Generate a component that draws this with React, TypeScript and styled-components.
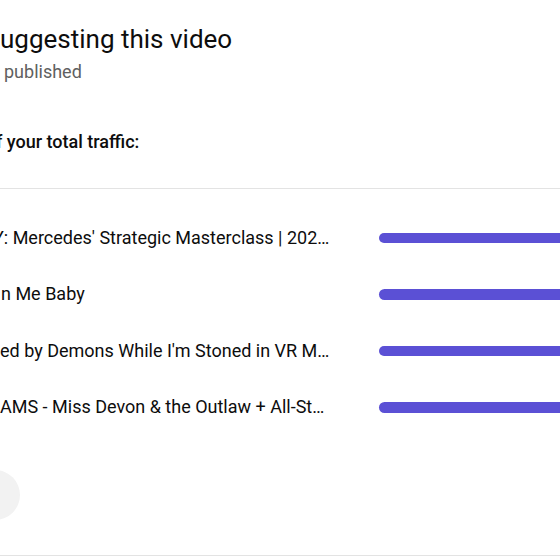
import React from "react";
import styled, { createGlobalStyle } from "styled-components";

const Global = createGlobalStyle`
  html, body {
    margin: 0;
    padding: 0;
    background: #ffffff;
    overflow: hidden;
  }
  body {
    font-family: Roboto, "Liberation Sans", Arial, sans-serif;
    color: #0f0f0f;
    -webkit-font-smoothing: antialiased;
  }
`;

const Viewport = styled.div`
  width: 560px;
  height: 560px;
  overflow: hidden;
`;

const Card = styled.section`
  width: 620px;
  display: flex;
  flex-direction: column;
  padding-top: 23px;
`;

const Title = styled.h2`
  margin: 0;
  font-size: 26px;
  line-height: 32px;
  font-weight: 400;
  color: #0d0d0d;
  white-space: nowrap;
`;

const Line = styled.div<{ $indent?: number; $muted?: boolean; $strong?: boolean; $gap?: number }>`
  margin-top: ${(p) => p.$gap ?? 0}px;
  font-size: 18px;
  line-height: 24px;
  font-weight: ${(p) => (p.$strong ? 500 : 400)};
  color: ${(p) => (p.$muted ? "#606060" : "#0d0d0d")};
  text-indent: ${(p) => p.$indent ?? 0}px;
  white-space: nowrap;
`;

const Divider = styled.hr`
  margin: 34px 0 0;
  border: 0;
  height: 1px;
  background: #e3e3e3;
`;

const List = styled.ul`
  list-style: none;
  margin: 0;
  padding: 20.6px 0 0;
  display: flex;
  flex-direction: column;
`;

const Row = styled.li`
  height: 56.5px;
  display: flex;
  align-items: center;
  gap: 46px;
`;

const VideoTitle = styled.span<{ $indent: number }>`
  flex: 0 0 333px;
  font-size: 18px;
  line-height: 24px;
  color: #0d0d0d;
  white-space: nowrap;
  overflow: hidden;
  text-overflow: ellipsis;
  text-indent: ${(p) => p.$indent}px;
`;

const Bar = styled.div`
  flex: 1;
  height: 10.5px;
  border-radius: 6px;
  background: #5b50d5;
`;

const Footer = styled.div`
  margin-top: 34.4px;
  display: flex;
`;

const MoreButton = styled.button`
  width: 80px;
  height: 50px;
  margin-left: -60px;
  border: 0;
  border-radius: 25px;
  background: #f2f2f2;
`;

const BottomRule = styled.div`
  margin-top: 35px;
  height: 1px;
  background: #e3e3e3;
`;

const rows = [
  { text: "Y: Mercedes' Strategic Masterclass | 2024 Hungarian Grand Prix", indent: -7 },
  { text: "n Me Baby", indent: 1 },
  { text: "ed by Demons While I'm Stoned in VR Multiplayer", indent: 0 },
  { text: "AMS - Miss Devon & the Outlaw + All-Star Band", indent: 0 },
];

export default function App() {
  return (
    <Viewport>
      <Global />
      <Card>
        <Title>uggesting this video</Title>
        <Line $muted $indent={4} $gap={5}>
          published
        </Line>
        <Line $strong $indent={-4} $gap={46}>
          f your total traffic:
        </Line>
        <Divider />
        <List>
          {rows.map((r) => (
            <Row key={r.text}>
              <VideoTitle $indent={r.indent}>{r.text}</VideoTitle>
              <Bar />
            </Row>
          ))}
        </List>
        <Footer>
          <MoreButton aria-label="more" />
        </Footer>
        <BottomRule />
      </Card>
    </Viewport>
  );
}
